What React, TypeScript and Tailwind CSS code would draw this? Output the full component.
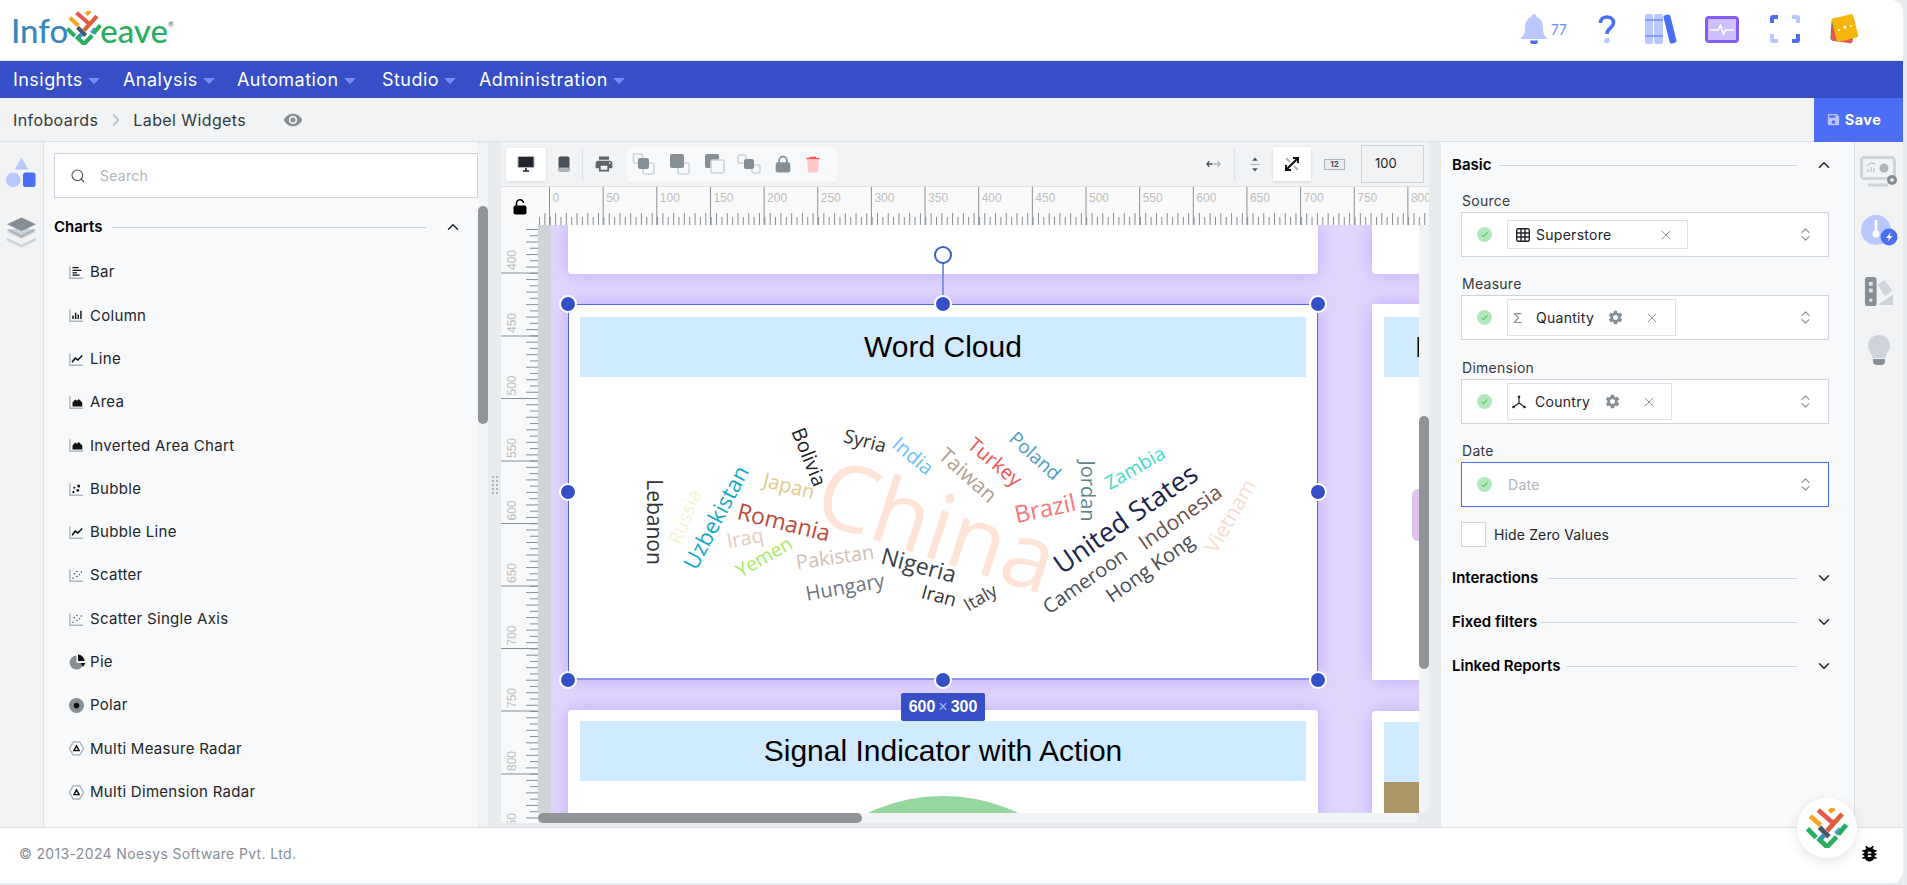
import { ChevronDown, ChevronRight, ChevronUp, ChevronsUpDown, Search, X } from "lucide-react";
import { MdPrint, MdRemoveRedEye, MdSave, MdSettings, MdBugReport, MdCheck } from "react-icons/md";
import type { ReactNode } from "react";

const NAV = [
  { label: "Insights", width: "w-[110px]" },
  { label: "Analysis", width: "w-[114px]" },
  { label: "Automation", width: "w-[145px]" },
  { label: "Studio", width: "w-[97px]" },
  { label: "Administration", width: "w-[170px]" },
];

const CHARTS: { label: string; icon: string }[] = [
  { label: "Bar", icon: "bar" },
  { label: "Column", icon: "column" },
  { label: "Line", icon: "line" },
  { label: "Area", icon: "area" },
  { label: "Inverted Area Chart", icon: "area" },
  { label: "Bubble", icon: "bubble" },
  { label: "Bubble Line", icon: "line" },
  { label: "Scatter", icon: "scatter" },
  { label: "Scatter Single Axis", icon: "scatter" },
  { label: "Pie", icon: "pie" },
  { label: "Polar", icon: "polar" },
  { label: "Multi Measure Radar", icon: "radar" },
  { label: "Multi Dimension Radar", icon: "radar" },
];

const WORDS = [
  { t: "China", x: 370, y: 220, r: 18, s: 92, c: "#ffe3d6" },
  { t: "Lebanon", x: 86, y: 218, r: 90, s: 21, c: "#333333" },
  { t: "Russia", x: 117, y: 213, r: -68, s: 19, c: "#f7f5cf" },
  { t: "Uzbekistan", x: 147, y: 213, r: -62, s: 22, c: "#12a9c9" },
  { t: "Japan", x: 221, y: 182, r: 14, s: 20, c: "#e2c98c" },
  { t: "Bolivia", x: 241, y: 153, r: 68, s: 20, c: "#222222" },
  { t: "Syria", x: 297, y: 137, r: 15, s: 19, c: "#333333" },
  { t: "India", x: 345, y: 152, r: 40, s: 20, c: "#6ec1ff" },
  { t: "Turkey", x: 427, y: 158, r: 40, s: 20, c: "#ef5350" },
  { t: "Taiwan", x: 400, y: 171, r: 42, s: 21, c: "#b5a08f" },
  { t: "Poland", x: 467, y: 152, r: 42, s: 19, c: "#4e9bc7" },
  { t: "Zambia", x: 567, y: 164, r: -30, s: 19, c: "#3edcc8" },
  { t: "Jordan", x: 520, y: 187, r: 90, s: 20, c: "#5f8389" },
  { t: "Brazil", x: 477, y: 204, r: -12, s: 24, c: "#fb7676" },
  { t: "United States", x: 557, y: 214, r: -35, s: 27, c: "#1a2550" },
  { t: "Indonesia", x: 612, y: 213, r: -35, s: 21, c: "#6d5047" },
  { t: "Vietnam", x: 662, y: 212, r: -60, s: 21, c: "#f8dccf" },
  { t: "Hong Kong", x: 582, y: 264, r: -35, s: 20, c: "#444b52" },
  { t: "Cameroon", x: 517, y: 277, r: -35, s: 20, c: "#4a4f55" },
  { t: "Romania", x: 216, y: 218, r: 14, s: 23, c: "#c0483a" },
  { t: "Iraq", x: 177, y: 234, r: -10, s: 20, c: "#eccabb" },
  { t: "Yemen", x: 196, y: 253, r: -30, s: 19, c: "#a5e85c" },
  { t: "Pakistan", x: 267, y: 253, r: -8, s: 20, c: "#d4c0b4" },
  { t: "Nigeria", x: 351, y: 261, r: 15, s: 23, c: "#39404a" },
  { t: "Hungary", x: 277, y: 283, r: -10, s: 20, c: "#6c757d" },
  { t: "Iran", x: 371, y: 292, r: 15, s: 19, c: "#333333" },
  { t: "Italy", x: 412, y: 293, r: -30, s: 18, c: "#444444" },
];

function WeaveMark({ className }: { className?: string }) {
  return (
    <svg viewBox="0 0 104 100" className={className} fill="none" strokeWidth="12">
      <path d="M10 20 L36 43" stroke="#f5a623" />
      <path d="M30 5 L72 42" stroke="#e8574f" />
      <path d="M58 10 L70 0" stroke="#f5a623" />
      <path d="M90 15 L52 57" stroke="#d9603a" />
      <path d="M33 48 L57 72" stroke="#4a5568" />
      <path d="M45 68 L30 83" stroke="#3c8dc3" />
      <path d="M86 52 L74 65" stroke="#6a9bdc" />
      <path d="M3 52 L25 74 M30 76 L52 97 L76 72 M80 66 L100 42" stroke="#27ae60" />
    </svg>
  );
}

function ChartIcon({ type }: { type: string }) {
  const axis = <path d="M1 1 V14.5 H16" fill="none" stroke="#adb5bd" strokeWidth="1.6" />;
  if (type === "pie")
    return (
      <svg viewBox="0 0 16 16" className="h-[16px] w-[17px]">
        <path d="M7 1.5 A7 7 0 1 0 14 10 L7 8.5 Z" fill="#868e96" />
        <path d="M8.5 0.5 A7 7 0 0 1 15 7 L8.5 7 Z" fill="#111" />
        <path d="M11 9 L16 9 L13.5 13 Z" fill="#111" />
      </svg>
    );
  if (type === "polar")
    return (
      <svg viewBox="0 0 16 16" className="h-[15px] w-[15px]">
        <circle cx="8" cy="8" r="8" fill="#868e96" />
        <circle cx="8" cy="8" r="3" fill="#111" />
      </svg>
    );
  if (type === "radar")
    return (
      <svg viewBox="0 0 16 16" className="h-[15px] w-[15px]">
        <path d="M4.5 1 H11.5 L15.5 8 L11.5 15 H4.5 L0.5 8 Z" fill="#fff" stroke="#adb5bd" strokeWidth="1.6" />
        <path d="M8 3.5 L12 11 H4 Z M8 7 L6.5 9.5 H9.5 Z" fill="#111" fillRule="evenodd" />
      </svg>
    );
  return (
    <svg viewBox="0 0 17 16" className="h-[15px] w-[15px]">
      {axis}
      {type === "bar" && <path d="M4 2.5 H11 M4 5.5 H14 M4 8.5 H9 M4 11 H12" stroke="#111" strokeWidth="1.4" />}
      {type === "column" && <path d="M4.5 12 V8 M7.5 12 V5 M10.5 12 V7 M13.5 12 V2.5" stroke="#111" strokeWidth="1.6" />}
      {type === "line" && <path d="M3.5 11 L7 6.5 L10 8.5 L15 3.5" fill="none" stroke="#111" strokeWidth="1.8" />}
      {type === "area" && <path d="M4 12.5 V8 L7 4.5 L9 6 L11 4 L15 8 V12.5 Z" fill="#111" />}
      {type === "bubble" && (
        <g fill="#111">
          <circle cx="11" cy="4" r="1.7" />
          <circle cx="6" cy="6" r="1.2" />
          <circle cx="10" cy="9" r="1.5" />
          <circle cx="5" cy="11" r="1.2" />
        </g>
      )}
      {type === "scatter" && (
        <g fill="#333">
          <circle cx="9" cy="3.5" r="0.8" />
          <circle cx="6" cy="6" r="0.8" />
          <circle cx="12" cy="7" r="0.8" />
          <circle cx="9" cy="9" r="0.8" />
          <circle cx="4.5" cy="11" r="0.8" />
          <circle cx="14" cy="4" r="0.8" />
        </g>
      )}
    </svg>
  );
}

function Arrange({ variant }: { variant: number }) {
  const back = <rect x="11" y="11" width="11" height="11" rx="2" fill="#f8f9fa" stroke="#ced4da" strokeWidth="1.6" />;
  return (
    <svg viewBox="0 0 24 24" className="h-[24px] w-[24px]">
      {variant === 0 && (
        <>
          <rect x="1.5" y="2" width="9" height="9" rx="2" fill="none" stroke="#ced4da" strokeWidth="1.6" />
          {back}
          <rect x="6" y="6" width="11" height="11" rx="2" fill="#868e96" />
        </>
      )}
      {variant === 1 && (
        <>
          {back}
          <rect x="3" y="2" width="14" height="14" rx="2" fill="#868e96" />
        </>
      )}
      {variant === 2 && (
        <>
          <rect x="3" y="2" width="14" height="14" rx="2" fill="#868e96" />
          <rect x="9" y="8" width="13" height="13" rx="2" fill="#f8f9fa" stroke="#ced4da" strokeWidth="1.6" />
        </>
      )}
      {variant === 3 && (
        <>
          <rect x="1" y="3" width="8" height="8" rx="2" fill="none" stroke="#ced4da" strokeWidth="1.6" />
          <rect x="15" y="13" width="8" height="8" rx="2" fill="none" stroke="#ced4da" strokeWidth="1.6" />
          <rect x="7" y="7" width="10" height="10" rx="2" fill="#868e96" />
        </>
      )}
    </svg>
  );
}

function TopRuler() {
  const ticks = Array.from({ length: 166 }, (_, i) => i);
  const majors = Array.from({ length: 17 }, (_, i) => i);
  return (
    <svg width="891" height="38" className="block">
      {ticks.map((i) => {
        const x = 1.5 + i * 5.365;
        return <line key={i} x1={x} x2={x} y1={i % 2 === 0 ? 30 : 26} y2="38" stroke="#868e96" strokeWidth="1" />;
      })}
      {majors.map((i) => {
        const x = 11.5 + i * 53.65;
        return (
          <g key={i}>
            <line x1={x} x2={x} y1="0" y2="38" stroke="#868e96" strokeWidth="1" />
            <text x={x + 3} y="15" fontSize="12" fill="#bdbdbd" fontFamily="Liberation Sans, sans-serif">
              {i * 50}
            </text>
          </g>
        );
      })}
    </svg>
  );
}

function LeftRuler() {
  const ticks = Array.from({ length: 96 }, (_, i) => i);
  const majors = [
    { y: 48, v: 400 },
    { y: 111, v: 450 },
    { y: 173.5, v: 500 },
    { y: 236, v: 550 },
    { y: 298.5, v: 600 },
    { y: 361, v: 650 },
    { y: 423.5, v: 700 },
    { y: 486, v: 750 },
    { y: 549, v: 800 },
    { y: 611, v: 850 },
  ];
  return (
    <svg width="37" height="598" className="block">
      {ticks.map((i) => {
        const y = 4.5 + i * 6.26;
        return <line key={i} x1={i % 2 === 0 ? 25 : 29} x2="37" y1={y} y2={y} stroke="#868e96" strokeWidth="1" />;
      })}
      {majors.map((m) => (
        <g key={m.v}>
          <line x1="0" x2="37" y1={m.y} y2={m.y} stroke="#868e96" strokeWidth="1" />
          <text
            x="15"
            y={m.y - 3}
            fontSize="12"
            fill="#bdbdbd"
            fontFamily="Liberation Sans, sans-serif"
            transform={`rotate(-90 15 ${m.y - 3})`}
          >
            {m.v}
          </text>
        </g>
      ))}
    </svg>
  );
}

function Grip() {
  return (
    <div className="grid grid-cols-2 gap-x-[2px] gap-y-[2px]">
      {Array.from({ length: 10 }, (_, i) => (
        <span key={i} className="h-[2px] w-[2px] bg-[#adb5bd]" />
      ))}
    </div>
  );
}

function SectionHead({ label, open, lineWidth }: { label: string; open?: boolean; lineWidth: string }) {
  return (
    <div className="flex h-[20px] items-center">
      <span className="text-[15px] font-semibold text-black">{label}</span>
      <span className={`ml-auto h-px ${lineWidth} bg-[#ced4da]`} />
      {open ? (
        <ChevronUp className="ml-[18px] h-[18px] w-[18px] text-[#212529]" strokeWidth={2} />
      ) : (
        <ChevronDown className="ml-[18px] h-[18px] w-[18px] text-[#212529]" strokeWidth={2} />
      )}
    </div>
  );
}

function Field({
  label,
  chip,
  children,
  focus,
  labelGap,
}: {
  label: string;
  chip?: string;
  children?: ReactNode;
  focus?: boolean;
  labelGap: string;
}) {
  return (
    <div className={labelGap}>
      <div className="mb-px pl-px text-[14px] leading-[20px] tracking-[0.02em] text-[#343a40]">{label}</div>
      <div
        className={`flex h-[45px] w-[368px] items-center border bg-white pl-[15px] pr-[14px] ${
          focus ? "border-[#4c6ef5]" : "border-[#ced4da]"
        }`}
      >
        <span className="flex h-[15px] w-[15px] items-center justify-center rounded-full bg-[#b2e8bd]">
          <MdCheck className="h-[9px] w-[9px] text-[#40c057]" />
        </span>
        <div className={`ml-[15px] flex items-center ${chip ?? ""}`}>{children}</div>
        <ChevronsUpDown className="ml-auto h-[17px] w-[17px] text-[#868e96]" strokeWidth={1.5} />
      </div>
    </div>
  );
}

function Word({ w }: { w: (typeof WORDS)[number] }) {
  return (
    <span
      className="absolute whitespace-nowrap leading-none [font-family:'Open_Sans',sans-serif]"
      style={{
        left: w.x,
        top: w.y,
        fontSize: w.s,
        color: w.c,
        transform: `translate(-50%, -50%) rotate(${w.r}deg)`,
      }}
    >
      {w.t}
    </span>
  );
}

function TitleBar({ title, left }: { title: string; left?: boolean }) {
  return (
    <div
      className={`mx-[12px] flex h-[60px] items-center bg-[#d0ebff] pb-[2px] text-[30px] text-black [font-family:'Liberation_Sans',sans-serif] ${
        left ? "justify-start pl-[31px]" : "justify-center"
      }`}
    >
      {title}
    </div>
  );
}

function Padlock({ className, open, body }: { className: string; open?: boolean; body: string }) {
  return (
    <svg viewBox="0 0 16 16" className={className}>
      <path
        d={open ? "M4.500 7 V4.500 A3.500 3.500 0 0 1 11.500 4 " : "M4.500 7 V5 A3.500 3.500 0 0 1 11.500 5 V7"}
        fill="none"
        stroke={body}
        strokeWidth="1.500"
      />
      <rect x="1.500" y="6.500" width="13" height="9" rx="2" fill={body} />
    </svg>
  );
}

export default function App() {
  return (
    <div className="h-[885px] w-full overflow-hidden bg-[#e9ecef] [font-family:Inter,sans-serif]">
      <div className="relative h-[883px] w-[1903px]">
        {/* header */}
        <header className="flex h-[61px] items-start rounded-tr-[12px] border-b border-[#e9ecef] bg-white">
          <div className="ml-[11px] mt-[12px] flex h-[36px] items-end [font-family:Lato,sans-serif] text-[33px] font-medium leading-[36px]">
            <span className="text-[#3a87bd]">Info</span>
            <WeaveMark className="mb-[3px] ml-[-2px] h-[34px] w-[36px]" />
            <span className="ml-[-2px] text-[#27ae60]">eave</span>
            <span className="mb-[20px] text-[7px] leading-none text-[#666]">®</span>
          </div>
          <div className="ml-auto mr-[44px] mt-[13px] flex items-center">
            <svg viewBox="0 0 28 30" className="h-[30px] w-[28px]">
              <path d="M14 0 a2.5 2.5 0 0 1 2.5 3 C22 4.5 23 10 23 15 C23 20 25 22 27 24 V25 H1 V24 C3 22 5 20 5 15 C5 10 6 4.5 11.500 3 A2.5 2.5 0 0 1 14 0 Z" fill="#bac8ff" />
              <path d="M10 26.500 H18 A4 4 0 0 1 10 26.500 Z" fill="#4c6ef5" />
            </svg>
            <span className="ml-[3px] text-[14px] text-[#748ffc]">77</span>
            <svg viewBox="0 0 18 30" className="ml-[31px] h-[30px] w-[18px]">
              <path d="M2.500 9 C2.500 1 15.500 1 15.500 9 C15.500 14 9 14 9 20" fill="none" stroke="#4c6ef5" strokeWidth="3.6" />
              <circle cx="9" cy="26.500" r="2.800" fill="#bac8ff" />
            </svg>
            <svg viewBox="0 0 32 30" className="ml-[29px] h-[30px] w-[32px]">
              <rect x="0" y="0" width="8" height="30" rx="2" fill="#bac8ff" />
              <rect x="9" y="0" width="9" height="30" rx="2" fill="#bac8ff" />
              <path d="M0 6 H18 M0 22 H18" stroke="#748ffc" strokeWidth="1.4" />
              <rect x="21.500" y="0.500" width="7" height="29" rx="2" fill="#4c6ef5" transform="rotate(-14 25 15)" />
            </svg>
            <svg viewBox="0 0 34 27" className="ml-[28px] h-[27px] w-[34px]">
              <rect x="1.500" y="1.500" width="31" height="24" rx="2.500" fill="#d0bfff" stroke="#845ef7" strokeWidth="3" />
              <path d="M5 14 H13 L15.500 9.500 L18.500 18 L20.500 14 H29" fill="none" stroke="#fff" strokeWidth="1.600" />
            </svg>
            <svg viewBox="0 0 30 28" className="ml-[31px] h-[28px] w-[30px]">
              <path d="M8 2 H3 A1 1 0 0 0 2 3 V8" fill="none" stroke="#4c6ef5" strokeWidth="4" />
              <path d="M22 2 H27 A1 1 0 0 1 28 3 V8" fill="none" stroke="#bac8ff" strokeWidth="4" />
              <path d="M2 19 V25 A1 1 0 0 0 3 26 H8" fill="none" stroke="#bac8ff" strokeWidth="4" />
              <path d="M28 19 V25 A1 1 0 0 1 27 26 H22" fill="none" stroke="#4c6ef5" strokeWidth="4" />
            </svg>
            <svg viewBox="0 0 30 32" className="ml-[29px] h-[32px] w-[30px]">
              <rect x="2" y="6" width="22" height="22" rx="2" fill="#2f9e44" transform="rotate(4 13 17)" />
              <rect x="3" y="6" width="22" height="23" rx="2" fill="#e8574f" transform="rotate(8 14 17)" />
              <rect x="5" y="3" width="22" height="24" rx="2" fill="#f5b50a" transform="rotate(-14 16 15)" />
              <circle cx="10" cy="17" r="1" fill="#fff" />
              <circle cx="16" cy="14" r="1.600" fill="#fff" />
              <circle cx="22" cy="13" r="1" fill="#fff" />
            </svg>
          </div>
        </header>

        {/* main nav */}
        <nav className="flex h-[37px] items-center bg-[#364fc7] pl-[13px] text-[18px] tracking-[0.025em] text-white">
          {NAV.map((n) => (
            <div key={n.label} className={`flex items-center ${n.width}`}>
              <span>{n.label}</span>
              <span className="ml-[5px] mt-[2px] h-0 w-0 border-x-[6px] border-t-[6px] border-x-transparent border-t-[#748ffc]" />
            </div>
          ))}
        </nav>

        {/* breadcrumb */}
        <div className="flex h-[44px] items-center border-b border-[#dee2e6] bg-[#f1f3f5] pl-[13px] text-[16px] tracking-[0.025em] text-[#343a40]">
          <span>Infoboards</span>
          <ChevronRight className="ml-[8px] h-[20px] w-[20px] text-[#adb5bd]" strokeWidth={1.6} />
          <span className="ml-[7px]">Label Widgets</span>
          <MdRemoveRedEye className="ml-[37px] h-[20px] w-[20px] text-[#868e96]" />
          <button className="ml-auto flex h-[44px] w-[89px] items-center justify-center gap-[4px] bg-[#4c6ef5] pr-[10px] text-[14.5px] font-bold text-white">
            <MdSave className="h-[15px] w-[15px] text-[#bac8ff]" />
            Save
          </button>
        </div>

        {/* work area */}
        <div className="flex h-[685px]">
          {/* left rail */}
          <div className="flex w-[44px] flex-col items-center border-r border-[#dee2e6] bg-[#f1f3f5] pt-[15px]">
            <svg viewBox="0 0 32 32" className="h-[31px] w-[31px]">
              <path d="M16 0.500 L23 13 H9 Z" fill="#bac8ff" />
              <circle cx="7.500" cy="23.500" r="7.500" fill="#bac8ff" />
              <rect x="17.500" y="16" width="13" height="15" rx="3" fill="#4c6ef5" />
            </svg>
            <svg viewBox="0 0 32 32" className="mt-[28px] h-[32px] w-[31px]">
              <path d="M16 9 L31 16 L16 23 L1 16 Z M1 22 L16 29 L31 22 L31 25 L16 32 L1 25 Z" fill="#ced4da" />
              <path d="M16 1 L31 8 L16 15 L1 8 Z" fill="#868e96" />
              <path d="M1 14 L4 13 L16 19 L28 13 L31 14 L16 22 Z" fill="#adb5bd" />
            </svg>
          </div>

          {/* widget list */}
          <aside className="w-[434px] bg-[#f8f9fa] pl-[10px] pt-[11px]">
            <div className="flex h-[45px] w-[424px] items-center border border-[#ced4da] bg-white pl-[15px] text-[14px] tracking-[0.02em] text-[#adb5bd]">
              <Search className="h-[16px] w-[16px] text-[#495057]" strokeWidth={1.6} />
              <span className="ml-[14px]">Search</span>
            </div>
            <div className="mt-[19px] w-[408px]">
              <SectionHead label="Charts" open lineWidth="w-[314px]" />
            </div>
            <ul className="mt-[14px]">
              {CHARTS.map((c) => (
                <li
                  key={c.label}
                  className="flex h-[43.3px] items-center pl-[15px] text-[15px] tracking-[0.02em] text-[#212529]"
                >
                  <span className="flex w-[21px] items-center">
                    <ChartIcon type={c.icon} />
                  </span>
                  <span>{c.label}</span>
                </li>
              ))}
            </ul>
          </aside>

          {/* list scrollbar */}
          <div className="w-[10px] rounded-[5px] bg-[#f1f3f5] pt-[64px]">
            <div className="h-[218px] rounded-[5px] bg-[#909498]" />
          </div>

          <div className="flex w-[13px] items-center justify-center bg-[#e9ecef]">
            <Grip />
          </div>

          {/* designer */}
          <div className="flex w-[928px] flex-col">
            {/* toolbar */}
            <div className="flex h-[45px] items-center border-b border-[#dee2e6] bg-[#f1f3f5] pl-[5px]">
              <button className="flex h-[33px] w-[40px] items-center justify-center bg-white shadow-[0_1px_3px_rgba(0,0,0,0.12)]">
                <svg viewBox="0 0 18 18" className="h-[18px] w-[18px]">
                  <rect x="1" y="1.500" width="16" height="11" rx="1" fill="#212529" stroke="#adb5bd" strokeWidth="1" />
                  <path d="M6 16 H12 M9 13 V16" stroke="#212529" strokeWidth="1.600" />
                </svg>
              </button>
              <svg viewBox="0 0 12 16" className="ml-[12px] h-[18px] w-[12px]">
                <rect x="0.500" y="0.500" width="11" height="15" rx="2" fill="#495057" />
                <rect x="0.500" y="11.500" width="11" height="4" rx="1" fill="#adb5bd" />
              </svg>
              <span className="ml-[12px] h-[33px] w-px bg-[#dee2e6]" />
              <MdPrint className="ml-[11px] h-[20px] w-[20px] text-[#5c636a]" />
              <div className="ml-[13px] flex h-[35px] w-[210px] items-center rounded-[2px] bg-[#f8f9fa] pl-[5px] shadow-[0_1px_2px_rgba(0,0,0,0.04)]">
                <Arrange variant={0} />
                <span className="ml-[11px]">
                  <Arrange variant={1} />
                </span>
                <span className="ml-[11px]">
                  <Arrange variant={2} />
                </span>
                <span className="ml-[11px]">
                  <Arrange variant={3} />
                </span>
                <span className="ml-[13px] flex">
                  <Padlock className="h-[18px] w-[18px]" body="#868e96" />
                </span>
                <svg viewBox="0 0 14 16" className="ml-[14px] h-[17px] w-[14px]">
                  <path d="M1 3 H13 L12 16 H2 Z" fill="#ffc9c9" />
                  <path d="M0.500 2 H13.500 M4 1 H10" stroke="#fa5252" strokeWidth="1.600" />
                </svg>
              </div>
              <svg viewBox="0 0 16 10" className="ml-[369px] h-[10px] w-[15px]">
                <path d="M7 5 H1 M3.500 2 L1 5 L3.500 8" fill="none" stroke="#495057" strokeWidth="1.400" />
                <path d="M8 5 H15 M12.500 2 L15 5 L12.500 8" fill="none" stroke="#adb5bd" strokeWidth="1.400" />
              </svg>
              <span className="ml-[13px] h-[33px] w-px bg-[#dee2e6]" />
              <svg viewBox="0 0 12 16" className="ml-[14px] h-[15px] w-[12px]">
                <path d="M1 8 H11" stroke="#adb5bd" strokeWidth="1.200" />
                <path d="M6 0.500 L9 4 H3 Z M6 15.500 L9 12 H3 Z" fill="#495057" />
              </svg>
              <button className="ml-[12px] flex h-[34px] w-[38px] items-center justify-center bg-white shadow-[0_1px_3px_rgba(0,0,0,0.12)]">
                <svg viewBox="0 0 14 14" className="h-[14px] w-[14px]">
                  <path d="M1 13 L13 1 M8 1 H13 V6 M1 8 V13 H6" fill="none" stroke="#111" strokeWidth="2" />
                  <path d="M1 1 L5 5 M13 13 L9 9" stroke="#adb5bd" strokeWidth="2" />
                </svg>
              </button>
              <span className="ml-[13px] flex h-[11px] w-[21px] items-center justify-center border border-[#adb5bd] bg-[#e9ecef] text-[8px] font-bold leading-none text-[#495057]">
                12
              </span>
              <div className="ml-[16px] flex h-[38px] w-[63px] items-center border border-[#ced4da] pl-[13px] text-[13px] text-[#212529]">
                100
              </div>
            </div>

            {/* top ruler */}
            <div className="flex h-[38px] bg-[#fafafa]">
              <div className="flex w-[37px] items-center justify-center pt-[2px]">
                <Padlock className="h-[16px] w-[16px]" open body="#000000" />
              </div>
              <TopRuler />
            </div>

            <div className="flex h-[602px]">
              <div className="h-[598px] w-[37px] overflow-hidden bg-[#f8f9fa]">
                <LeftRuler />
              </div>
              <div className="w-[891px]">
                <div className="flex h-[588px]">
                  <div className="w-[13px] bg-[#ced4da]" />
                  {/* canvas */}
                  <div className="relative h-[588px] w-[868px] overflow-hidden bg-[#e1d6fe]">
                    <div className="grid w-[1600px] grid-cols-[750px_750px] grid-rows-[49px_376px_120px] gap-x-[54px] gap-y-[30px] pl-[17px]">
                      <div className="rounded-b-[4px] bg-white shadow-[0_0_18px_rgba(165,135,250,0.55)]" />
                      <div className="rounded-b-[4px] bg-white shadow-[0_0_18px_rgba(165,135,250,0.55)]" />

                      {/* selected word cloud card */}
                      <div className="relative z-10 bg-white pt-[13px] shadow-[0_0_18px_rgba(165,135,250,0.55)]">
                        <TitleBar title="Word Cloud" />
                        {WORDS.map((w) => (
                          <Word key={w.t} w={w} />
                        ))}
                        <div className="absolute inset-0 border border-b-2 border-[#5468dd] border-b-[#9494ea]" />
                        <span className="absolute left-1/2 top-[-41px] h-[33px] w-[2px] -translate-x-1/2 bg-[#8492e4]" />
                        <span className="absolute left-1/2 top-[-49px] h-[18px] w-[18px] -translate-x-1/2 -translate-y-1/2 rounded-full border-2 border-[#3f5bd0] bg-white" />
                        <span className="absolute left-0 top-0 h-[18px] w-[18px] -translate-x-1/2 -translate-y-1/2 rounded-full border-2 border-white bg-[#364fc7]" />
                        <span className="absolute left-1/2 top-0 h-[18px] w-[18px] -translate-x-1/2 -translate-y-1/2 rounded-full border-2 border-white bg-[#364fc7]" />
                        <span className="absolute left-full top-0 h-[18px] w-[18px] -translate-x-1/2 -translate-y-1/2 rounded-full border-2 border-white bg-[#364fc7]" />
                        <span className="absolute left-0 top-1/2 h-[18px] w-[18px] -translate-x-1/2 -translate-y-1/2 rounded-full border-2 border-white bg-[#364fc7]" />
                        <span className="absolute left-full top-1/2 h-[18px] w-[18px] -translate-x-1/2 -translate-y-1/2 rounded-full border-2 border-white bg-[#364fc7]" />
                        <span className="absolute left-0 top-full h-[18px] w-[18px] -translate-x-1/2 -translate-y-1/2 rounded-full border-2 border-white bg-[#364fc7]" />
                        <span className="absolute left-1/2 top-full h-[18px] w-[18px] -translate-x-1/2 -translate-y-1/2 rounded-full border-2 border-white bg-[#364fc7]" />
                        <span className="absolute left-full top-full h-[18px] w-[18px] -translate-x-1/2 -translate-y-1/2 rounded-full border-2 border-white bg-[#364fc7]" />
                        <div className="absolute left-[333px] top-[389px] flex h-[28px] w-[84px] items-center justify-center gap-[3px] rounded-[2px] bg-[#364fc7] text-[16px] font-bold text-white [font-family:'Liberation_Sans',sans-serif]">
                          600 <span className="font-normal text-[#a5b4f5]">×</span> 300
                        </div>
                      </div>

                      <div className="relative bg-white pt-[13px] shadow-[0_0_18px_rgba(165,135,250,0.55)]">
                        <TitleBar title="Label" left />
                        <span className="absolute left-[40px] top-[185px] h-[52px] w-[20px] rounded-l-[6px] bg-[#dfc3ea]" />
                      </div>

                      {/* cards of the next row */}
                      <div className="relative overflow-hidden rounded-[4px] bg-white pt-[11px] shadow-[0_0_18px_rgba(165,135,250,0.55)]">
                        <TitleBar title="Signal Indicator with Action" />
                        <span className="absolute left-[200px] top-[86px] h-[350px] w-[350px] rounded-full bg-[#96d7a0]" />
                      </div>
                      <div className="mt-px rounded-[4px] bg-white pt-[11px] shadow-[0_0_18px_rgba(165,135,250,0.55)]">
                        <TitleBar title="" />
                        <div className="mx-[12px] h-[40px] bg-[#ab9666]" />
                      </div>
                    </div>
                  </div>
                  <div className="w-[10px] rounded-[5px] bg-[#f1f3f5] pt-[191px]">
                    <div className="h-[253px] rounded-[5px] bg-[#909498]" />
                  </div>
                </div>
                <div className="h-[10px] w-[880px] rounded-[5px] bg-[#f1f3f5]">
                  <div className="h-[10px] w-[324px] rounded-[5px] bg-[#909498]" />
                </div>
              </div>
            </div>
          </div>

          <div className="w-[12px] bg-[#e9ecef]" />

          {/* settings */}
          <aside className="w-[413px] bg-[#f8f9fa] pl-[11px] pt-[13px]">
            <div className="w-[381px]">
              <SectionHead label="Basic" open lineWidth="w-[298px]" />
            </div>
            <div className="pl-[9px]">
              <Field label="Source" labelGap="mt-[16px]" chip="h-[29px] w-[181px] border border-[#dee2e6] pl-[8px] text-[14px] text-[#212529]">
                <svg viewBox="0 0 14 14" className="h-[14px] w-[14px]">
                  <rect x="0.700" y="0.700" width="12.600" height="12.600" rx="1.500" fill="#fff" stroke="#212529" strokeWidth="1.400" />
                  <path d="M1 5 H13 M1 9 H13 M5 1 V13 M9 1 V13" stroke="#212529" strokeWidth="1.400" />
                </svg>
                <span className="ml-[6px] tracking-[0.02em]">Superstore</span>
                <X className="ml-auto mr-[13px] h-[16px] w-[16px] text-[#868e96]" strokeWidth={1.4} />
              </Field>
              <Field label="Measure" labelGap="mt-[17px]" chip="h-[37px] w-[169px] border border-[#dee2e6] pl-[5px] text-[14px] text-[#212529]">
                <span className="w-[23px] text-[15px] leading-none text-[#868e96] [font-family:'Liberation_Sans',sans-serif]">Σ</span>
                <span className="tracking-[0.02em]">Quantity</span>
                <MdSettings className="ml-[13px] h-[17px] w-[17px] text-[#868e96]" />
                <X className="ml-[20px] h-[16px] w-[16px] text-[#868e96]" strokeWidth={1.4} />
              </Field>
              <Field label="Dimension" labelGap="mt-[18px]" chip="h-[37px] w-[165px] border border-[#dee2e6] pl-[4px] text-[14px] text-[#212529]">
                <svg viewBox="0 0 14 14" className="h-[14px] w-[14px]">
                  <path d="M7 2 V8 L1.500 12 M7 8 L12.500 12" fill="none" stroke="#212529" strokeWidth="1.200" />
                  <circle cx="7" cy="1.800" r="1.300" fill="#212529" />
                  <circle cx="1.500" cy="12" r="1.300" fill="#212529" />
                  <circle cx="12.500" cy="12" r="1.300" fill="#212529" />
                </svg>
                <span className="ml-[9px] tracking-[0.02em]">Country</span>
                <MdSettings className="ml-[14px] h-[17px] w-[17px] text-[#868e96]" />
                <X className="ml-[20px] h-[16px] w-[16px] text-[#868e96]" strokeWidth={1.4} />
              </Field>
              <Field label="Date" focus labelGap="mt-[17px]" chip="text-[14px] text-[#adb5bd]">
                <span className="ml-px tracking-[0.02em]">Date</span>
              </Field>
              <label className="mt-[15px] flex items-center">
                <span className="h-[25px] w-[25px] border border-[#ced4da] bg-white" />
                <span className="ml-[8px] text-[14px] tracking-[0.01em] text-[#212529]">Hide Zero Values</span>
              </label>
            </div>
            <div className="mt-[21px] flex w-[381px] flex-col gap-[24px]">
              <SectionHead label="Interactions" lineWidth="w-[249px]" />
              <SectionHead label="Fixed filters" lineWidth="w-[256px]" />
              <SectionHead label="Linked Reports" lineWidth="w-[230px]" />
            </div>
          </aside>

          {/* right rail */}
          <div className="flex w-[49px] flex-col items-center border-l border-[#dee2e6] bg-[#f1f3f5] pt-[14px]">
            <svg viewBox="0 0 38 32" className="h-[32px] w-[38px]">
              <rect x="1.500" y="1.500" width="33" height="21" rx="3" fill="none" stroke="#ced4da" strokeWidth="3" />
              <path d="M8 29 H28" stroke="#ced4da" strokeWidth="3" />
              <path d="M8 16 V13 M11 16 V11 M14 16 V12 M7 10 L11 7 L15 8" fill="none" stroke="#adb5bd" strokeWidth="1" />
              <circle cx="24" cy="12" r="4.500" fill="#adb5bd" />
              <circle cx="32" cy="24" r="5" fill="#868e96" />
              <circle cx="32" cy="24" r="1.800" fill="#f1f3f5" />
            </svg>
            <svg viewBox="0 0 38 32" className="mt-[27px] h-[32px] w-[38px]">
              <circle cx="16" cy="15" r="15" fill="#bac8ff" />
              <path d="M16 5 V18" stroke="#fff" strokeWidth="2.500" />
              <circle cx="16" cy="19" r="3.500" fill="#fff" />
              <circle cx="29" cy="22" r="8.500" fill="#4c6ef5" />
              <path d="M31 17 L26 23 H29 L27.500 27 L32.500 21 H29.500 Z" fill="#fff" />
            </svg>
            <svg viewBox="0 0 32 32" className="mt-[29px] h-[31px] w-[31px]">
              <path d="M14 9 L21 4 L29 15 L22 21 Z" fill="#ced4da" />
              <path d="M14 30 L30 19 V30 Z" fill="#ced4da" />
              <rect x="1" y="1" width="12" height="30" rx="3" fill="#868e96" />
              <rect x="5" y="6" width="4" height="4" fill="#dee2e6" />
              <rect x="5" y="13" width="4" height="4" fill="#dee2e6" />
              <circle cx="7" cy="25" r="1.800" fill="#dee2e6" />
            </svg>
            <svg viewBox="0 0 22 30" className="mt-[28px] h-[30px] w-[22px]">
              <path d="M11 0 C4 0 0 5 0 11 C0 16 4 18 4.500 23 H17.500 C18 18 22 16 22 11 C22 5 18 0 11 0 Z" fill="#ced4da" />
              <path d="M5 24 H17 V26 A4 4 0 0 1 13 30 H9 A4 4 0 0 1 5 26 Z" fill="#868e96" />
            </svg>
          </div>
        </div>

        {/* footer */}
        <footer className="flex h-[56px] items-center rounded-br-[12px] border-t border-[#dee2e6] bg-white pb-[4px] pl-[19px] text-[14px] tracking-[0.025em] text-[#868e96]">
          © 2013-2024 Noesys Software Pvt. Ltd.
        </footer>

        <div className="absolute left-[1797px] top-[798px] flex h-[60px] w-[60px] items-center justify-center rounded-full bg-white shadow-[0_4px_14px_rgba(0,0,0,0.10)]">
          <WeaveMark className="h-[40px] w-[42px]" />
        </div>
        <MdBugReport className="absolute left-[1859px] top-[843px] h-[21px] w-[21px] text-black" />
      </div>
    </div>
  );
}
